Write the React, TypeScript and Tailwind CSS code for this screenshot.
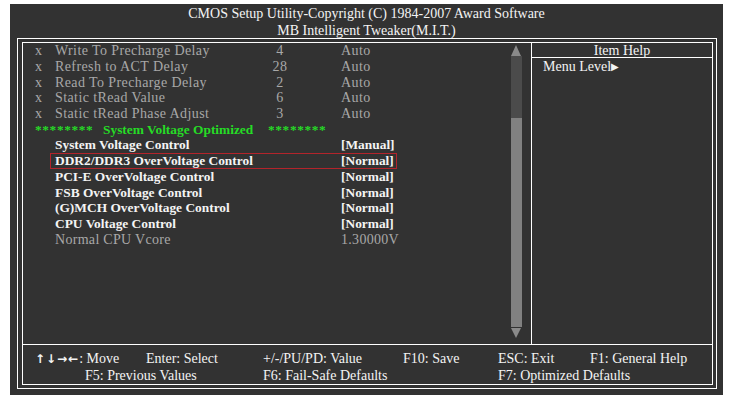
const FONT = { fontFamily: '"Liberation Serif", "Times New Roman", serif' };

type Row =
  | { kind: 'locked'; label: string; num: string; value: string }
  | { kind: 'title' }
  | { kind: 'item'; label: string; value: string; selected?: boolean }
  | { kind: 'info'; label: string; value: string };

const ROWS: Row[] = [
  { kind: 'locked', label: 'Write To Precharge Delay', num: '4', value: 'Auto' },
  { kind: 'locked', label: 'Refresh to ACT Delay', num: '28', value: 'Auto' },
  { kind: 'locked', label: 'Read To Precharge Delay', num: '2', value: 'Auto' },
  { kind: 'locked', label: 'Static tRead Value', num: '6', value: 'Auto' },
  { kind: 'locked', label: 'Static tRead Phase Adjust', num: '3', value: 'Auto' },
  { kind: 'title' },
  { kind: 'item', label: 'System Voltage Control', value: '[Manual]' },
  { kind: 'item', label: 'DDR2/DDR3 OverVoltage Control', value: '[Normal]', selected: true },
  { kind: 'item', label: 'PCI-E OverVoltage Control', value: '[Normal]' },
  { kind: 'item', label: 'FSB OverVoltage Control', value: '[Normal]' },
  { kind: 'item', label: '(G)MCH OverVoltage Control', value: '[Normal]' },
  { kind: 'item', label: 'CPU Voltage Control', value: '[Normal]' },
  { kind: 'info', label: 'Normal CPU Vcore', value: '1.30000V' },
];

function SetupRow({ row }: { row: Row }) {
  if (row.kind === 'locked') {
    return (
      <div className="grid grid-cols-[20px_213px_24px_49px_1fr] h-[15.75px] items-center pl-[12px] text-[#a8a8a8] text-[14px] tracking-[0.4px]">
        <span>x</span>
        <span>{row.label}</span>
        <span className="text-center">{row.num}</span>
        <span />
        <span>{row.value}</span>
      </div>
    );
  }
  if (row.kind === 'title') {
    return (
      <div className="grid grid-cols-[68px_165px_1fr] h-[15.75px] items-center pl-[12px] text-[#26dc26] text-[13.4px] font-bold">
        <span className="tracking-[0.6px]">********</span>
        <span>System Voltage Optimized</span>
        <span className="tracking-[0.6px]">********</span>
      </div>
    );
  }
  const color =
    row.kind === 'info'
      ? 'text-[#a8a8a8] font-normal text-[14px] tracking-[0.3px]'
      : 'text-[#f4f4f4] font-bold text-[13.4px]';
  return (
    <div className={`h-[15.75px] flex items-center pl-[27px] ${color}`}>
      <div
        className={`grid grid-cols-[286px_1fr] w-[347px] h-[16px] leading-[14px] items-center pl-[4px] border ${
          row.selected ? 'border-[#b3242b]' : 'border-transparent'
        }`}
      >
        <span>{row.label}</span>
        <span>{row.value}</span>
      </div>
    </div>
  );
}

function ScrollBar() {
  return (
    <div className="w-[12px] flex flex-col items-center mt-[1px]">
      <svg width="12" height="12" viewBox="0 0 12 12">
        <polygon points="6,1 11,12 1,12" fill="#8a8a8a" />
      </svg>
      <div className="w-[11px] h-[62px] bg-[#4b4b4b]" />
      <div className="w-[11px] h-[209px] bg-[#818181]" />
      <svg width="12" height="11" viewBox="0 0 12 11" className="mt-[1px]">
        <polygon points="1,0 11,0 6,10" fill="#8a8a8a" />
      </svg>
    </div>
  );
}

export default function App() {
  return (
    <div className="w-[732px] h-[399px] bg-white pt-[4px] pl-[10px] text-[14px]" style={FONT}>
      <div className="w-[713px] h-[391px] bg-[#323232] flex flex-col text-[#f4f4f4]">
        {/* title */}
        <div className="h-[34px] pt-[1px] flex flex-col items-center leading-[17px]">
          <div>CMOS Setup Utility-Copyright (C) 1984-2007 Award Software</div>
          <div>MB Intelligent Tweaker(M.I.T.)</div>
        </div>

        {/* double frame */}
        <div className="ml-[7px] w-[700px] h-[351px] border border-white pt-[3px] pl-[4px] pr-[3px] pb-[3px]">
          <div className="h-full border border-white flex flex-col">
            <div className="flex flex-1">
              {/* setup items */}
              <div className="w-[487px] leading-[15.75px]">
                {ROWS.map((r, i) => (
                  <SetupRow key={i} row={r} />
                ))}
              </div>
              <ScrollBar />
              <div className="w-[9px]" />
              {/* item help */}
              <div className="flex-1 border-l border-white flex flex-col">
                <div className="h-[15px] border-b border-white text-center leading-[15px]">Item Help</div>
                <div className="pl-[11px] leading-[16px] pt-[1px]">
                  Menu Level<span className="text-[10px] align-[1px]">▶</span>
                </div>
              </div>
            </div>

            {/* key legend */}
            <div className="h-[40px] border-t border-white pt-[6px] pl-[12px] grid grid-cols-[111px_117px_140px_95px_92px_1fr] leading-[16px] whitespace-nowrap">
              <span>
                <span className="font-bold tracking-[1px]" style={{ fontFamily: '"DejaVu Sans", sans-serif', fontSize: '12px' }}>
                  ↑↓→←
                </span>
                : Move
              </span>
              <span>Enter: Select</span>
              <span>+/-/PU/PD: Value</span>
              <span>F10: Save</span>
              <span>ESC: Exit</span>
              <span>F1: General Help</span>
              <span className="col-span-2 pl-[50px]">F5: Previous Values</span>
              <span className="col-span-2">F6: Fail-Safe Defaults</span>
              <span className="col-span-2">F7: Optimized Defaults</span>
            </div>
          </div>
        </div>
      </div>
    </div>
  );
}
